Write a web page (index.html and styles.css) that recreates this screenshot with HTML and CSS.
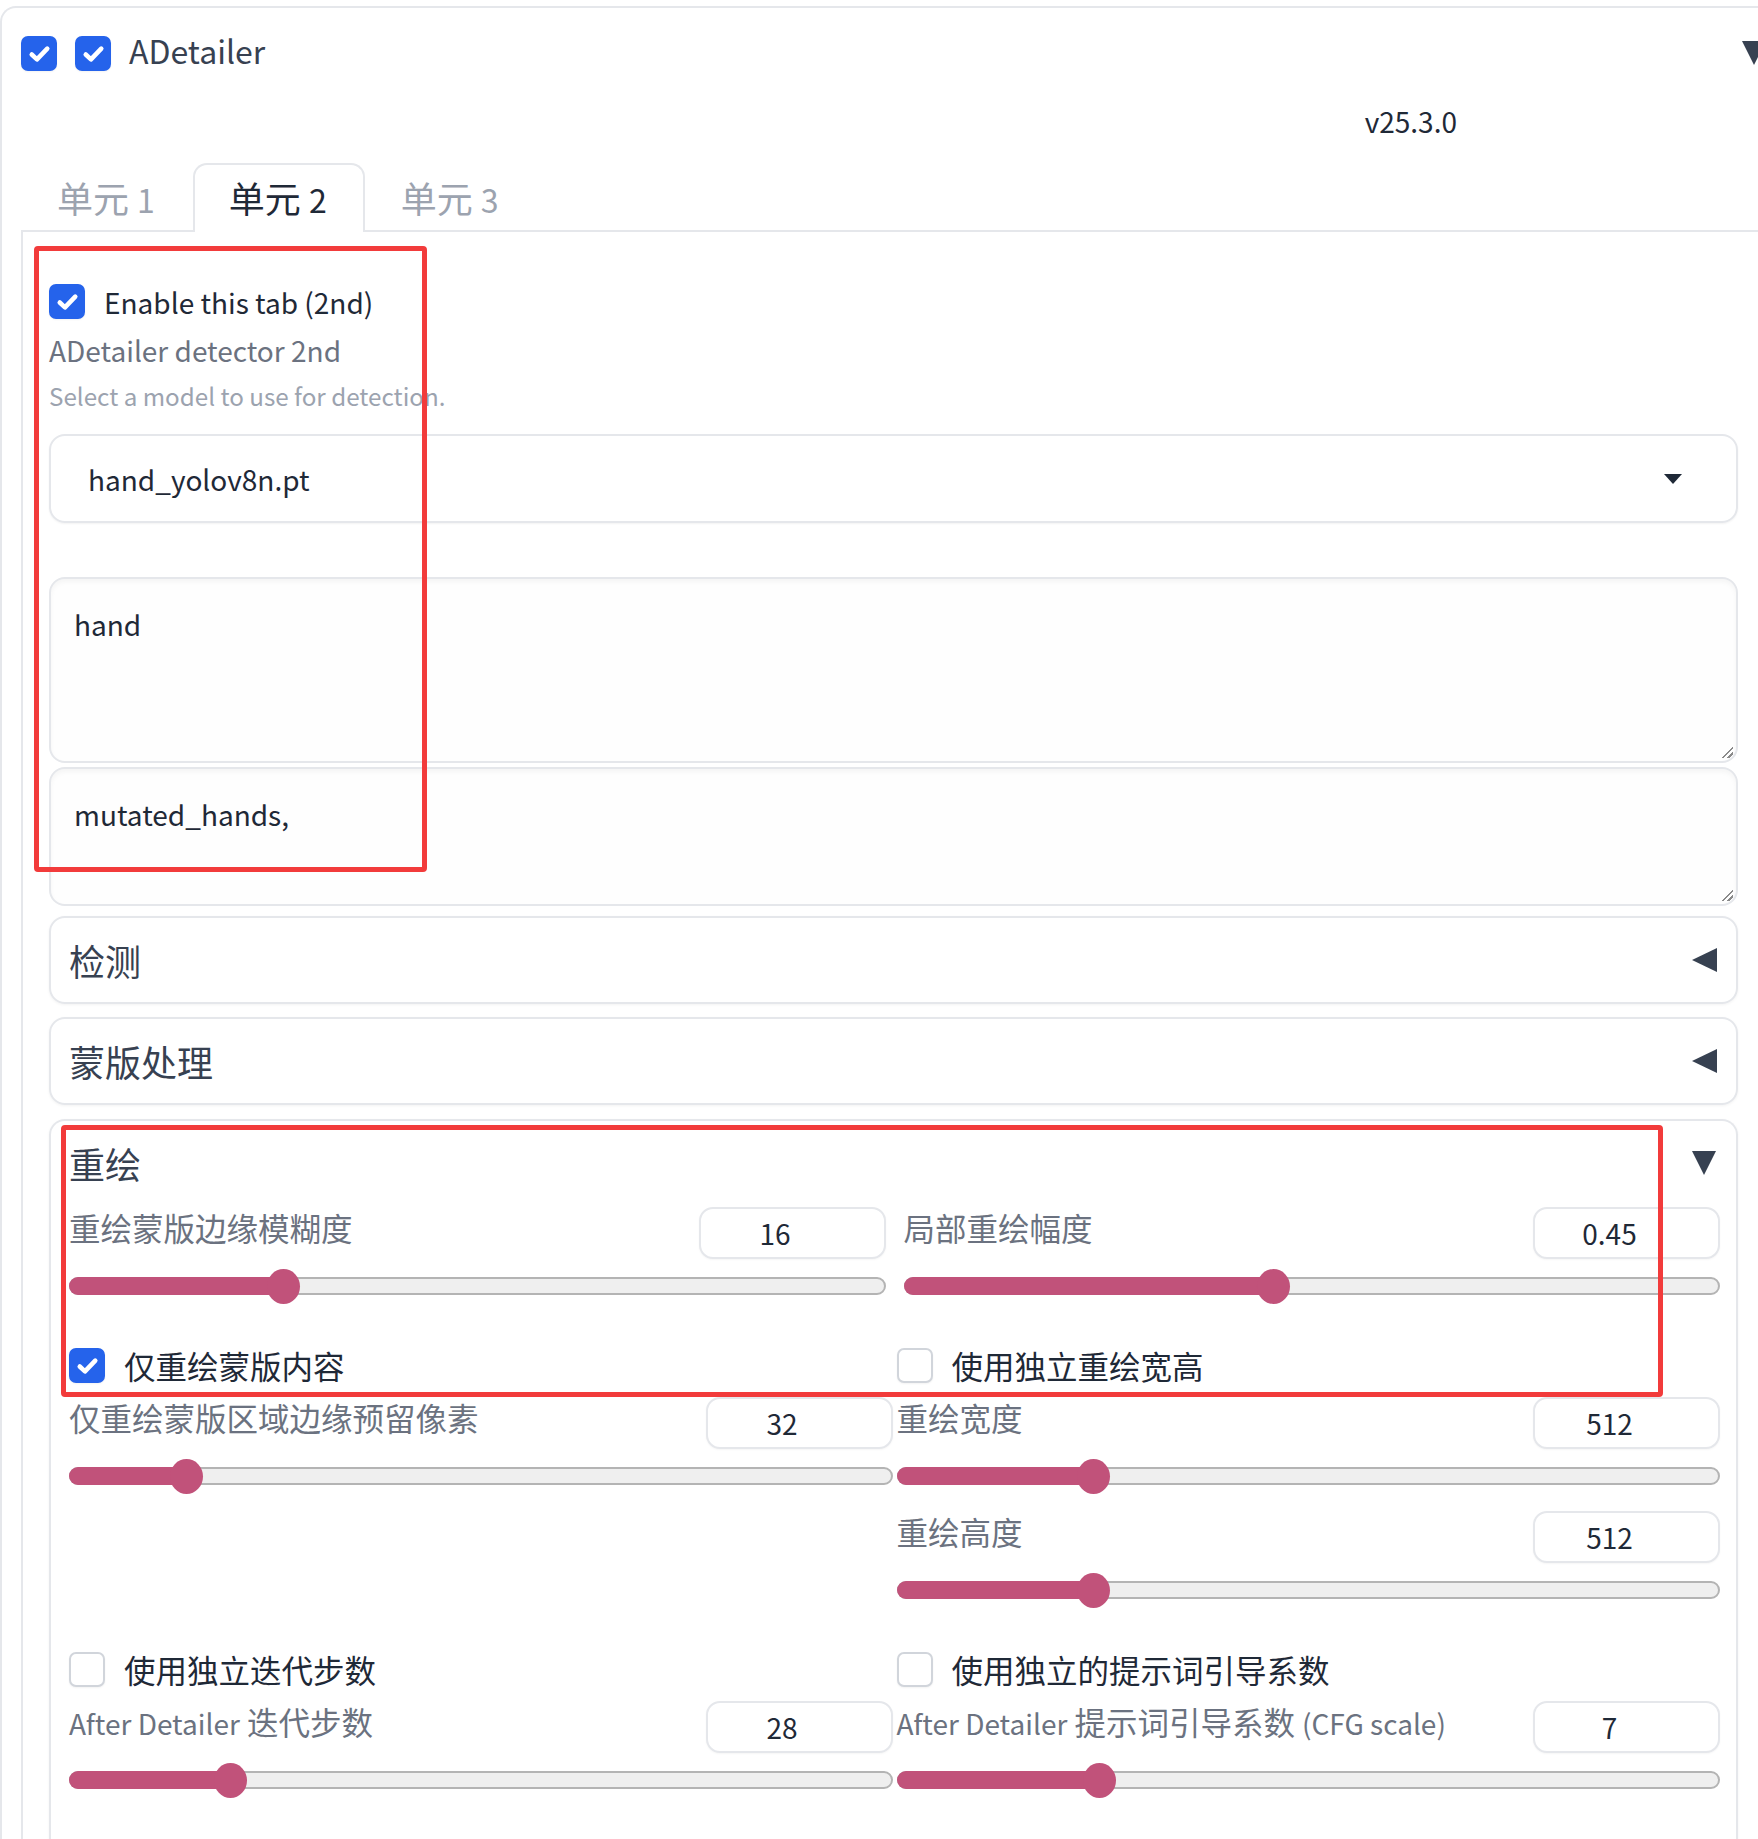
FILE: index.html
```html
<!DOCTYPE html>
<html lang="zh-CN">
<head>
    <meta charset="UTF-8">
    <meta name="viewport" content="width=device-width, initial-scale=1.0">
    <title>ADetailer</title>
    <link rel="stylesheet" href="styles.css">
</head>
<body>
<div class="block">
    <div class="block-head">
        <span class="cb on"><svg viewBox="0 0 16 16"><path d="M3.4 8.6l3.1 2.9 6.1-6.4"/></svg></span>
        <span class="cb on"><svg viewBox="0 0 16 16"><path d="M3.4 8.6l3.1 2.9 6.1-6.4"/></svg></span>
        <span class="block-title">ADetailer</span>
        <span class="tri-down head-tri"></span>
    </div>

    <div class="version">v25.3.0</div>

    <div class="tabs">
        <button class="tab">单元 <span class="en">1</span></button>
        <button class="tab active">单元 <span class="en">2</span></button>
        <button class="tab">单元 <span class="en">3</span></button>
    </div>

    <div class="tab-panel">
        <div class="mark mark-detector"></div>

        <label class="check-row">
            <span class="cb on"><svg viewBox="0 0 16 16"><path d="M3.4 8.6l3.1 2.9 6.1-6.4"/></svg></span>
            <span class="en">Enable this tab (2nd)</span>
        </label>
        <div class="field-label detector-label en">ADetailer detector 2nd</div>
        <div class="field-info">Select a model to use for detection.</div>
        <div class="dropdown">
            <span class="en">hand_yolov8n.pt</span>
            <span class="caret"></span>
        </div>

        <div class="textbox prompt"><span class="en">hand</span></div>
        <div class="textbox negative"><span class="en">mutated_hands,</span></div>

        <div class="accordion closed first">
            <span>检测</span>
            <span class="tri-left"></span>
        </div>
        <div class="accordion closed">
            <span>蒙版处理</span>
            <span class="tri-left"></span>
        </div>

        <div class="accordion open">
            <div class="mark mark-inpaint"></div>
            <div class="acc-head">
                <span>重绘</span>
                <span class="tri-down"></span>
            </div>

            <div class="grid2 wide-gap first-row">
                <div class="slider-field">
                    <div class="slider-top">
                        <span class="field-label">重绘蒙版边缘模糊度</span>
                        <span class="num">16</span>
                    </div>
                    <div class="range"><div class="range-fill" style="--v: 0.25"></div></div>
                </div>
                <div class="slider-field">
                    <div class="slider-top">
                        <span class="field-label">局部重绘幅度</span>
                        <span class="num">0.45</span>
                    </div>
                    <div class="range"><div class="range-fill" style="--v: 0.45"></div></div>
                </div>
            </div>

            <div class="grid2 check-line">
                <label class="check-row">
                    <span class="cb on"><svg viewBox="0 0 16 16"><path d="M3.4 8.6l3.1 2.9 6.1-6.4"/></svg></span>
                    <span>仅重绘蒙版内容</span>
                </label>
                <label class="check-row">
                    <span class="cb"></span>
                    <span>使用独立重绘宽高</span>
                </label>
            </div>

            <div class="grid2 slider-line">
                <div class="col">
                    <div class="slider-field">
                        <div class="slider-top">
                            <span class="field-label">仅重绘蒙版区域边缘预留像素</span>
                            <span class="num">32</span>
                        </div>
                        <div class="range"><div class="range-fill" style="--v: 0.125"></div></div>
                    </div>
                </div>
                <div class="col">
                    <div class="slider-field">
                        <div class="slider-top">
                            <span class="field-label">重绘宽度</span>
                            <span class="num">512</span>
                        </div>
                        <div class="range"><div class="range-fill" style="--v: 0.226"></div></div>
                    </div>
                    <div class="slider-field">
                        <div class="slider-top">
                            <span class="field-label">重绘高度</span>
                            <span class="num">512</span>
                        </div>
                        <div class="range"><div class="range-fill" style="--v: 0.226"></div></div>
                    </div>
                </div>
            </div>

            <div class="grid2 check-line">
                <label class="check-row">
                    <span class="cb"></span>
                    <span>使用独立迭代步数</span>
                </label>
                <label class="check-row">
                    <span class="cb"></span>
                    <span>使用独立的提示词引导系数</span>
                </label>
            </div>

            <div class="grid2 slider-line">
                <div class="slider-field">
                    <div class="slider-top">
                        <span class="field-label"><span class="en">After Detailer</span> 迭代步数</span>
                        <span class="num">28</span>
                    </div>
                    <div class="range"><div class="range-fill" style="--v: 0.181"></div></div>
                </div>
                <div class="slider-field">
                    <div class="slider-top">
                        <span class="field-label"><span class="en">After Detailer</span> 提示词引导系数 <span class="en">(CFG scale)</span></span>
                        <span class="num">7</span>
                    </div>
                    <div class="range"><div class="range-fill" style="--v: 0.233"></div></div>
                </div>
            </div>
        </div>
    </div>
</div>
</body>
</html>
```

FILE: styles.css
```css
html {
    overflow: hidden;
}
body {
    margin: 0;
    background: #ffffff;
    font-family: "Noto Sans CJK SC", "Noto Sans", sans-serif;
    font-size: 31.5px;
    color: #1f2937;
}
/* latin glyphs of the CJK face run wide, bring them down to size */
.en {
    font-size: 0.89em;
}

/* outer block */
.block {
    margin-top: 6px;
    padding: 27px 0 0 19px;
    border-top: 2px solid #e5e7eb;
    border-left: 2px solid #e5e7eb;
    border-top-left-radius: 16px;
    overflow: hidden;
}
.block-head {
    display: flex;
    align-items: center;
    gap: 18px;
    height: 36px;
}
.block-title {
    font-size: 32px;
    line-height: 36px;
    padding-bottom: 7px;
    color: #374151;
}
.head-tri {
    margin-left: auto;
    margin-right: -8px;
    border-left-width: 13px;
    border-right-width: 13px;
    border-top-width: 25px;
}
.version {
    margin-top: 30px;
    padding-right: 301px;
    text-align: right;
    font-size: 28px;
    line-height: 40px;
}

/* checkboxes */
.cb {
    display: inline-flex;
    align-items: center;
    justify-content: center;
    flex: none;
    width: 36px;
    height: 35px;
    box-sizing: border-box;
    border: 2px solid #d1d5db;
    border-radius: 7px;
    background: #ffffff;
    box-shadow: 0 1px 2px rgba(0, 0, 0, 0.05);
}
.cb.on {
    background: #2563eb;
    border-color: #2563eb;
}
.cb svg {
    width: 27px;
    height: 27px;
}
.cb svg path {
    fill: none;
    stroke: #ffffff;
    stroke-width: 2.7;
    stroke-linecap: round;
    stroke-linejoin: round;
}
.check-row {
    display: flex;
    align-items: center;
    gap: 19px;
    line-height: 35px;
    color: #1f2937;
}

/* tabs */
.tabs {
    display: flex;
    margin-top: 22px;
    margin-bottom: -2px;
    position: relative;
    z-index: 1;
}
.tab {
    height: 69px;
    padding: 0 36px 0 34px;
    box-sizing: border-box;
    border: 2px solid transparent;
    border-bottom: none;
    border-radius: 14px 14px 0 0;
    background: transparent;
    font-family: inherit;
    font-size: 36px;
    line-height: 63px;
    color: #9ca3af;
    align-self: flex-start;
}
.tab.active {
    border-color: #e5e7eb;
    background: #ffffff;
    color: #1f2937;
}
.tab-panel {
    position: relative;
    padding: 52px 20px 0 26px;
    border-top: 2px solid #e5e7eb;
    border-left: 2px solid #e5e7eb;
}

/* annotation frames */
.mark {
    position: absolute;
    box-sizing: border-box;
    border: 5px solid #f23b3b;
    border-radius: 4px;
    z-index: 2;
    pointer-events: none;
}
.mark-detector {
    left: 11px;
    top: 14px;
    width: 393px;
    height: 626px;
}
.mark-inpaint {
    left: 10px;
    top: 4px;
    width: 1602px;
    height: 272px;
}

/* fields */
.field-label {
    color: #6b7280;
    line-height: 40px;
}
.detector-label {
    margin-top: 11px;
}
.field-info {
    margin-top: 9px;
    font-size: 24.2px;
    line-height: 34px;
    color: #9ca3af;
}
.dropdown {
    display: flex;
    align-items: center;
    justify-content: space-between;
    margin-top: 21px;
    height: 89px;
    box-sizing: border-box;
    padding: 0 54px 0 37px;
    border: 2px solid #e5e7eb;
    border-radius: 16px;
    box-shadow: 0 1px 2px rgba(0, 0, 0, 0.05);
}
.caret {
    width: 0;
    height: 0;
    border-left: 9px solid transparent;
    border-right: 9px solid transparent;
    border-top: 10px solid #1f2937;
}
.textbox {
    position: relative;
    box-sizing: border-box;
    padding: 23px 23px;
    line-height: 40px;
    border: 2px solid #e5e7eb;
    border-radius: 16px;
    background: #fefefe;
    box-shadow: inset 0 3px 5px rgba(0, 0, 0, 0.04);
}
.textbox::after {
    content: "";
    position: absolute;
    right: 3px;
    bottom: 3px;
    width: 11px;
    height: 11px;
    background: linear-gradient(135deg, transparent 46%, #8a8a8a 46%, #8a8a8a 56%, transparent 56%, transparent 72%, #8a8a8a 72%, #8a8a8a 82%, transparent 82%);
}
.prompt {
    margin-top: 54px;
    height: 186px;
}
.negative {
    margin-top: 4px;
    height: 139px;
}

/* accordions */
.accordion {
    position: relative;
    box-sizing: border-box;
    border: 2px solid #e5e7eb;
    border-radius: 16px;
    box-shadow: 0 1px 3px rgba(0, 0, 0, 0.05);
    font-size: 36px;
    color: #374151;
}
.accordion.closed {
    display: flex;
    align-items: center;
    justify-content: space-between;
    height: 88px;
    margin-top: 13px;
    padding: 0 19px 0 18px;
    line-height: 44px;
}
.accordion.first {
    margin-top: 10px;
}
.accordion.open {
    margin-top: 14px;
    padding: 20px 16px 90px 18px;
    border-bottom: none;
    border-bottom-left-radius: 0;
    border-bottom-right-radius: 0;
}
.acc-head {
    display: flex;
    align-items: center;
    justify-content: space-between;
    height: 44px;
    line-height: 44px;
}
.acc-head .tri-down {
    margin-right: 4px;
}
.tri-left {
    width: 0;
    height: 0;
    border-top: 12px solid transparent;
    border-bottom: 12px solid transparent;
    border-right: 25px solid #374151;
}
.tri-down {
    width: 0;
    height: 0;
    border-left: 12.5px solid transparent;
    border-right: 12.5px solid transparent;
    border-top: 24px solid #374151;
}

/* inpaint grid */
.grid2 {
    display: grid;
    grid-template-columns: 1fr 1fr;
    gap: 4px;
    font-size: 31.5px;
}
.grid2.wide-gap {
    gap: 18px;
}
.first-row {
    margin-top: 22px;
}
.check-line {
    margin-top: 53px;
}
.slider-line {
    margin-top: 14px;
}
.col {
    display: flex;
    flex-direction: column;
    gap: 26px;
}
.slider-top {
    display: flex;
    justify-content: space-between;
    align-items: flex-start;
}
.num {
    width: 187px;
    height: 52px;
    box-sizing: border-box;
    padding-right: 34px;
    border: 2px solid #e5e7eb;
    border-radius: 14px;
    background: #ffffff;
    text-align: center;
    font-size: 28px;
    line-height: 48px;
    color: #1f2937;
    box-shadow: 0 1px 2px rgba(0, 0, 0, 0.04);
}
.range {
    position: relative;
    margin-top: 18px;
    height: 18px;
    box-sizing: border-box;
    border: 2px solid #b4b4b4;
    border-radius: 10px;
    background: #efefef;
}
.range-fill {
    position: absolute;
    left: -2px;
    top: -2px;
    bottom: -2px;
    width: calc(19px + (100% - 34px) * var(--v));
    border-radius: 10px 0 0 10px;
    background: #c1527a;
}
.range-fill::after {
    content: "";
    position: absolute;
    right: -17px;
    top: 50%;
    width: 33px;
    height: 35px;
    margin-top: -17.5px;
    border-radius: 50%;
    background: #c1527a;
}
```
